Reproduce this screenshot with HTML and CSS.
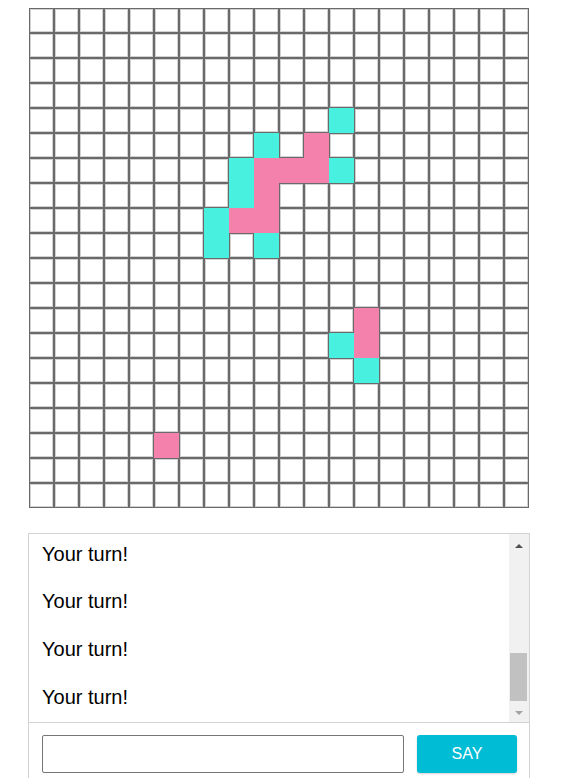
FILE: index.html
```html
<!DOCTYPE html>
<html>
<head>
<meta charset="utf-8">
<title>Game</title>
<link rel="stylesheet" href="styles.css">
</head>
<body>
<div class="page">
  <div class="board">
    <span class="cell"></span><span class="cell"></span><span class="cell"></span><span class="cell"></span><span class="cell"></span><span class="cell"></span><span class="cell"></span><span class="cell"></span><span class="cell"></span><span class="cell"></span><span class="cell"></span><span class="cell"></span><span class="cell"></span><span class="cell"></span><span class="cell"></span><span class="cell"></span><span class="cell"></span><span class="cell"></span><span class="cell"></span><span class="cell"></span>
    <span class="cell"></span><span class="cell"></span><span class="cell"></span><span class="cell"></span><span class="cell"></span><span class="cell"></span><span class="cell"></span><span class="cell"></span><span class="cell"></span><span class="cell"></span><span class="cell"></span><span class="cell"></span><span class="cell"></span><span class="cell"></span><span class="cell"></span><span class="cell"></span><span class="cell"></span><span class="cell"></span><span class="cell"></span><span class="cell"></span>
    <span class="cell"></span><span class="cell"></span><span class="cell"></span><span class="cell"></span><span class="cell"></span><span class="cell"></span><span class="cell"></span><span class="cell"></span><span class="cell"></span><span class="cell"></span><span class="cell"></span><span class="cell"></span><span class="cell"></span><span class="cell"></span><span class="cell"></span><span class="cell"></span><span class="cell"></span><span class="cell"></span><span class="cell"></span><span class="cell"></span>
    <span class="cell"></span><span class="cell"></span><span class="cell"></span><span class="cell"></span><span class="cell"></span><span class="cell"></span><span class="cell"></span><span class="cell"></span><span class="cell"></span><span class="cell"></span><span class="cell"></span><span class="cell"></span><span class="cell"></span><span class="cell"></span><span class="cell"></span><span class="cell"></span><span class="cell"></span><span class="cell"></span><span class="cell"></span><span class="cell"></span>
    <span class="cell"></span><span class="cell"></span><span class="cell"></span><span class="cell"></span><span class="cell"></span><span class="cell"></span><span class="cell"></span><span class="cell"></span><span class="cell"></span><span class="cell"></span><span class="cell"></span><span class="cell"></span><span class="cell teal"></span><span class="cell"></span><span class="cell"></span><span class="cell"></span><span class="cell"></span><span class="cell"></span><span class="cell"></span><span class="cell"></span>
    <span class="cell"></span><span class="cell"></span><span class="cell"></span><span class="cell"></span><span class="cell"></span><span class="cell"></span><span class="cell"></span><span class="cell"></span><span class="cell"></span><span class="cell teal"></span><span class="cell"></span><span class="cell pink"></span><span class="cell"></span><span class="cell"></span><span class="cell"></span><span class="cell"></span><span class="cell"></span><span class="cell"></span><span class="cell"></span><span class="cell"></span>
    <span class="cell"></span><span class="cell"></span><span class="cell"></span><span class="cell"></span><span class="cell"></span><span class="cell"></span><span class="cell"></span><span class="cell"></span><span class="cell teal"></span><span class="cell pink"></span><span class="cell pink"></span><span class="cell pink"></span><span class="cell teal"></span><span class="cell"></span><span class="cell"></span><span class="cell"></span><span class="cell"></span><span class="cell"></span><span class="cell"></span><span class="cell"></span>
    <span class="cell"></span><span class="cell"></span><span class="cell"></span><span class="cell"></span><span class="cell"></span><span class="cell"></span><span class="cell"></span><span class="cell"></span><span class="cell teal"></span><span class="cell pink"></span><span class="cell"></span><span class="cell"></span><span class="cell"></span><span class="cell"></span><span class="cell"></span><span class="cell"></span><span class="cell"></span><span class="cell"></span><span class="cell"></span><span class="cell"></span>
    <span class="cell"></span><span class="cell"></span><span class="cell"></span><span class="cell"></span><span class="cell"></span><span class="cell"></span><span class="cell"></span><span class="cell teal"></span><span class="cell pink"></span><span class="cell pink"></span><span class="cell"></span><span class="cell"></span><span class="cell"></span><span class="cell"></span><span class="cell"></span><span class="cell"></span><span class="cell"></span><span class="cell"></span><span class="cell"></span><span class="cell"></span>
    <span class="cell"></span><span class="cell"></span><span class="cell"></span><span class="cell"></span><span class="cell"></span><span class="cell"></span><span class="cell"></span><span class="cell teal"></span><span class="cell"></span><span class="cell teal"></span><span class="cell"></span><span class="cell"></span><span class="cell"></span><span class="cell"></span><span class="cell"></span><span class="cell"></span><span class="cell"></span><span class="cell"></span><span class="cell"></span><span class="cell"></span>
    <span class="cell"></span><span class="cell"></span><span class="cell"></span><span class="cell"></span><span class="cell"></span><span class="cell"></span><span class="cell"></span><span class="cell"></span><span class="cell"></span><span class="cell"></span><span class="cell"></span><span class="cell"></span><span class="cell"></span><span class="cell"></span><span class="cell"></span><span class="cell"></span><span class="cell"></span><span class="cell"></span><span class="cell"></span><span class="cell"></span>
    <span class="cell"></span><span class="cell"></span><span class="cell"></span><span class="cell"></span><span class="cell"></span><span class="cell"></span><span class="cell"></span><span class="cell"></span><span class="cell"></span><span class="cell"></span><span class="cell"></span><span class="cell"></span><span class="cell"></span><span class="cell"></span><span class="cell"></span><span class="cell"></span><span class="cell"></span><span class="cell"></span><span class="cell"></span><span class="cell"></span>
    <span class="cell"></span><span class="cell"></span><span class="cell"></span><span class="cell"></span><span class="cell"></span><span class="cell"></span><span class="cell"></span><span class="cell"></span><span class="cell"></span><span class="cell"></span><span class="cell"></span><span class="cell"></span><span class="cell"></span><span class="cell pink"></span><span class="cell"></span><span class="cell"></span><span class="cell"></span><span class="cell"></span><span class="cell"></span><span class="cell"></span>
    <span class="cell"></span><span class="cell"></span><span class="cell"></span><span class="cell"></span><span class="cell"></span><span class="cell"></span><span class="cell"></span><span class="cell"></span><span class="cell"></span><span class="cell"></span><span class="cell"></span><span class="cell"></span><span class="cell teal"></span><span class="cell pink"></span><span class="cell"></span><span class="cell"></span><span class="cell"></span><span class="cell"></span><span class="cell"></span><span class="cell"></span>
    <span class="cell"></span><span class="cell"></span><span class="cell"></span><span class="cell"></span><span class="cell"></span><span class="cell"></span><span class="cell"></span><span class="cell"></span><span class="cell"></span><span class="cell"></span><span class="cell"></span><span class="cell"></span><span class="cell"></span><span class="cell teal"></span><span class="cell"></span><span class="cell"></span><span class="cell"></span><span class="cell"></span><span class="cell"></span><span class="cell"></span>
    <span class="cell"></span><span class="cell"></span><span class="cell"></span><span class="cell"></span><span class="cell"></span><span class="cell"></span><span class="cell"></span><span class="cell"></span><span class="cell"></span><span class="cell"></span><span class="cell"></span><span class="cell"></span><span class="cell"></span><span class="cell"></span><span class="cell"></span><span class="cell"></span><span class="cell"></span><span class="cell"></span><span class="cell"></span><span class="cell"></span>
    <span class="cell"></span><span class="cell"></span><span class="cell"></span><span class="cell"></span><span class="cell"></span><span class="cell"></span><span class="cell"></span><span class="cell"></span><span class="cell"></span><span class="cell"></span><span class="cell"></span><span class="cell"></span><span class="cell"></span><span class="cell"></span><span class="cell"></span><span class="cell"></span><span class="cell"></span><span class="cell"></span><span class="cell"></span><span class="cell"></span>
    <span class="cell"></span><span class="cell"></span><span class="cell"></span><span class="cell"></span><span class="cell"></span><span class="cell pink"></span><span class="cell"></span><span class="cell"></span><span class="cell"></span><span class="cell"></span><span class="cell"></span><span class="cell"></span><span class="cell"></span><span class="cell"></span><span class="cell"></span><span class="cell"></span><span class="cell"></span><span class="cell"></span><span class="cell"></span><span class="cell"></span>
    <span class="cell"></span><span class="cell"></span><span class="cell"></span><span class="cell"></span><span class="cell"></span><span class="cell"></span><span class="cell"></span><span class="cell"></span><span class="cell"></span><span class="cell"></span><span class="cell"></span><span class="cell"></span><span class="cell"></span><span class="cell"></span><span class="cell"></span><span class="cell"></span><span class="cell"></span><span class="cell"></span><span class="cell"></span><span class="cell"></span>
    <span class="cell"></span><span class="cell"></span><span class="cell"></span><span class="cell"></span><span class="cell"></span><span class="cell"></span><span class="cell"></span><span class="cell"></span><span class="cell"></span><span class="cell"></span><span class="cell"></span><span class="cell"></span><span class="cell"></span><span class="cell"></span><span class="cell"></span><span class="cell"></span><span class="cell"></span><span class="cell"></span><span class="cell"></span><span class="cell"></span>
  </div>

  <div class="chat">
    <div class="log">
      <div class="messages">
        <div class="msg">Your turn!</div>
        <div class="msg">Your turn!</div>
        <div class="msg">Your turn!</div>
        <div class="msg">Your turn!</div>
      </div>
      <div class="scrollbar">
        <div class="sb-btn"><span class="arrow-up"></span></div>
        <div class="sb-track"><div class="sb-thumb"></div></div>
        <div class="sb-btn"><span class="arrow-down"></span></div>
      </div>
    </div>
    <div class="composer">
      <input class="say-input" type="text">
      <button class="say-btn" type="button">SAY</button>
    </div>
  </div>
</div>
</body>
</html>
```

FILE: styles.css
```css
html, body {
  margin: 0;
  padding: 0;
  background: #ffffff;
}

body {
  margin: 8px;
  font-family: "Liberation Sans", Arial, sans-serif;
  color: #000;
}

.page {
  padding-left: 20px;
}

.board {
  display: grid;
  grid-template-columns: repeat(20, 25px);
  grid-template-rows: repeat(20, 25px);
  width: 500px;
  margin-left: 1px;
}

.cell {
  box-sizing: border-box;
  width: 25px;
  height: 25px;
  border: 1px solid #6a6a6a;
  box-shadow: inset 0 0 0 1px #d2d2d2;
  background: #fff;
}

.cell.teal {
  background: #48f0df;
  border-color: #48f0df;
  box-shadow: none;
}

.cell.pink {
  background: #f381ab;
  border-color: #f381ab;
  box-shadow: none;
}

.chat {
  margin-top: 25px;
  width: 500px;
  border: 1px solid #d2d2d2;
}

.log {
  display: flex;
  height: 188px;
  border-bottom: 1px solid #d2d2d2;
}

.messages {
  flex: 1;
  display: flex;
  flex-direction: column;
  justify-content: flex-end;
  overflow: hidden;
  padding: 0 0 1px 13px;
}

.msg {
  flex: none;
  font-size: 20px;
  line-height: 23px;
  padding: 12.33px 0;
}

.scrollbar {
  width: 20px;
  flex: none;
  background: #f1f1f1;
  display: flex;
  flex-direction: column;
}

.sb-btn {
  height: 24px;
  flex: none;
  display: flex;
  align-items: center;
  justify-content: center;
}

.arrow-up {
  width: 0;
  height: 0;
  border-left: 4.5px solid transparent;
  border-right: 4.5px solid transparent;
  border-bottom: 4.5px solid #505050;
}

.arrow-down {
  width: 0;
  height: 0;
  border-left: 4.5px solid transparent;
  border-right: 4.5px solid transparent;
  border-top: 4.5px solid #a3a3a3;
}

.sb-track {
  flex: 1;
  padding-top: 95px;
}

.sb-thumb {
  width: 17px;
  height: 48px;
  margin-left: 1px;
  background: #c1c1c1;
}

.composer {
  display: flex;
  align-items: center;
  gap: 13px;
  padding: 12px 12px 12px 13px;
}

.say-input {
  box-sizing: border-box;
  width: 362px;
  height: 38px;
  margin: 0;
  border: 1px solid #767676;
  border-radius: 2px;
  padding: 0 8px;
  font-family: "Liberation Sans", Arial, sans-serif;
  font-size: 16px;
  background: #fff;
}

.say-btn {
  box-sizing: border-box;
  width: 100px;
  height: 38px;
  margin: 0;
  border: none;
  border-radius: 3px;
  background: #00bcd4;
  color: #fff;
  font-family: "Liberation Sans", Arial, sans-serif;
  font-size: 16px;
  box-shadow: 0 1px 2px rgba(0, 0, 0, 0.18);
  padding: 0;
}
```
